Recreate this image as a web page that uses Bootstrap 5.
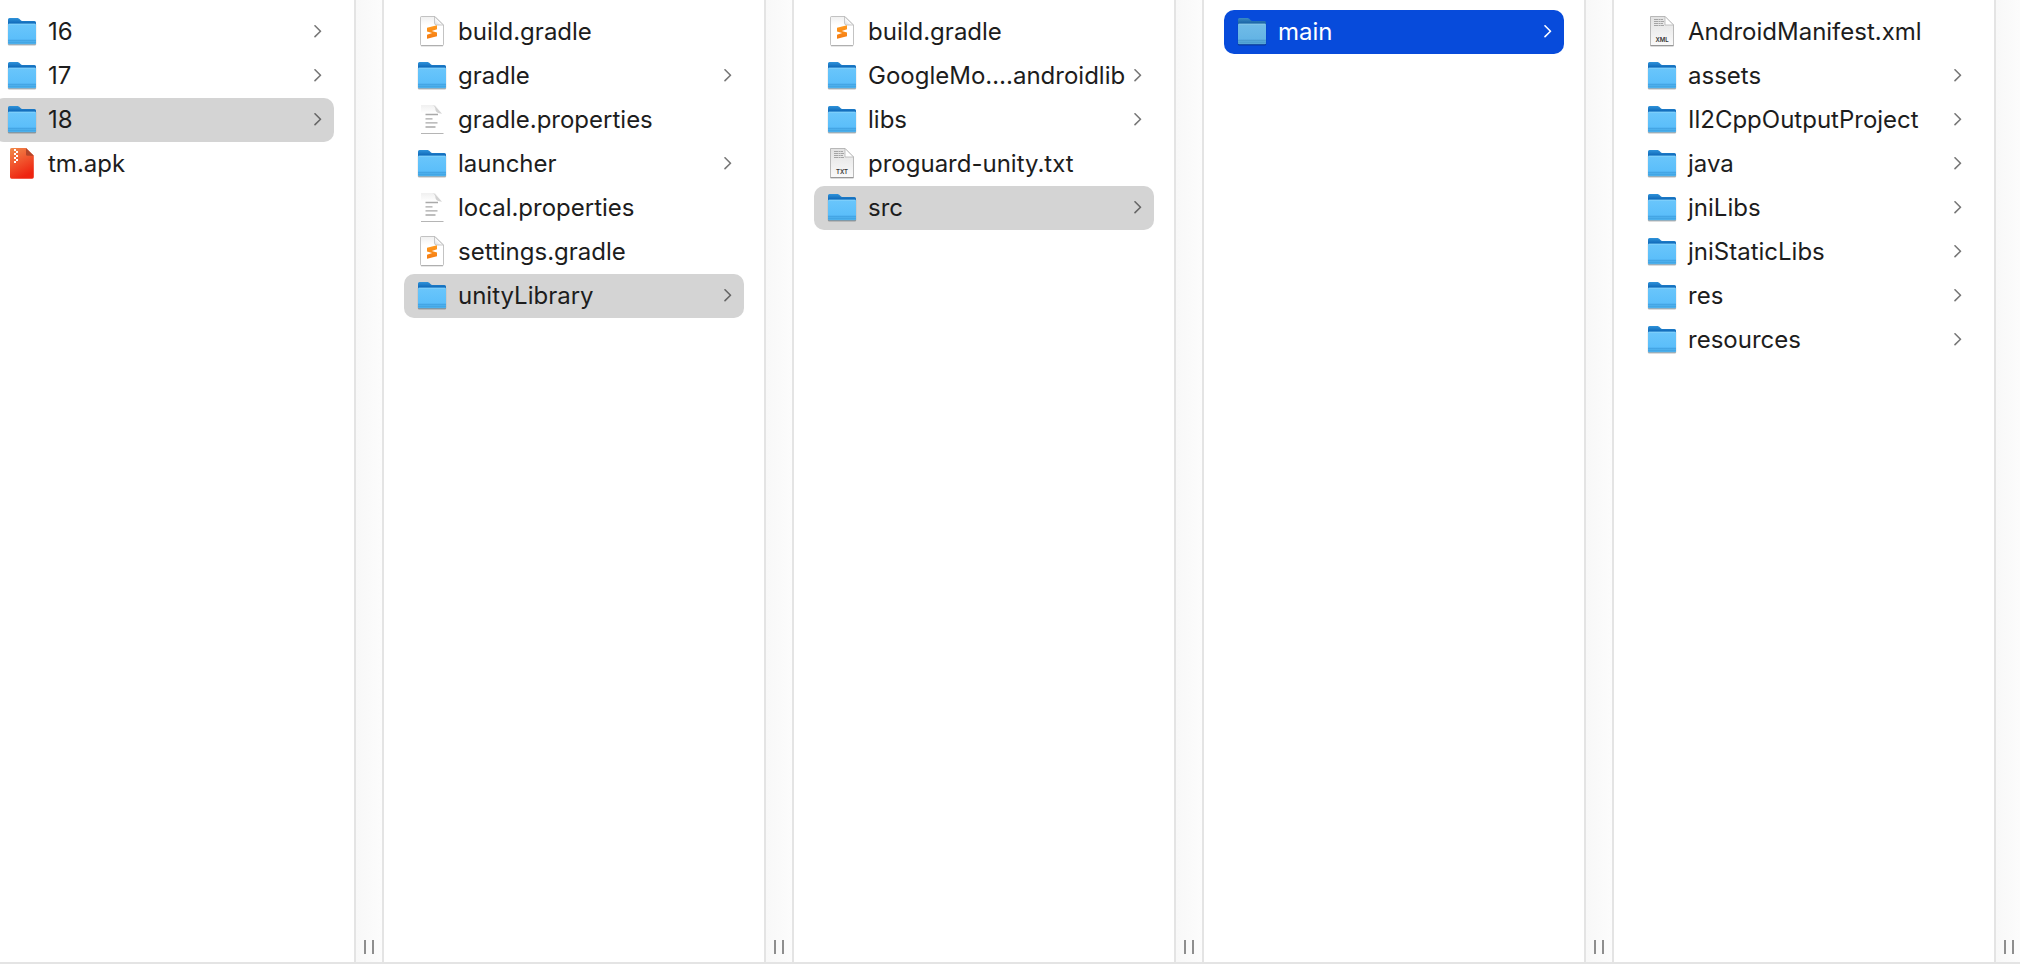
<!DOCTYPE html>
<html lang="en">
<head>
<meta charset="utf-8">
<meta name="viewport" content="width=device-width, initial-scale=1">
<title>unityLibrary</title>
<link href="https://cdn.jsdelivr.net/npm/bootstrap@5.3.0/dist/css/bootstrap.min.css" rel="stylesheet">
<style>
  body { font-family: Inter, "Liberation Sans", sans-serif; font-size: 24px; line-height: 32px; color: #1d1d1d; background: #fff; }
  .browser { border-bottom: 2px solid #e4e4e4; }
  .pane { flex: 380 1 0; min-width: 0; }
  .pane .list-group { padding: 10px 20px; }
  .pane-first { flex-grow: 354; }
  .pane-first .list-group { padding-left: 0; margin-left: -6px; }
  .entry { height: 44px; padding: 0 12px; gap: 10px; border-radius: 10px; color: inherit; text-decoration: none; }
  .entry span { min-width: 0; }
  .entry.selected { background: #d4d4d4; }
  .entry.focused { background: #074bdb; color: #fff; }
  .entry-icon { width: 32px; height: 32px; }
  .entry-icon text { font-size: 6px; font-weight: 600; fill: #333; text-anchor: middle; }
  .chevron { width: 8px; height: 14px; fill: none; stroke: #777; stroke-width: 1.6; stroke-linecap: round; stroke-linejoin: round; }
  .selected .chevron { stroke: #666; }
  .focused .chevron { stroke: #fff; }
  .focused .entry-icon { filter: brightness(.96) saturate(.85); }
  .gutter { width: 30px; border: solid #e4e4e4; border-width: 0 2px; background: linear-gradient(90deg, #f8f8f8, #fcfcfc); padding: 0 8px 8px; }
  .gutter-last { width: 26px; border-right: 0; padding-right: 0; }
  .grip { width: 10px; height: 14px; padding: 0; background: none; border: solid #8e8e8e; border-width: 0 2px; cursor: col-resize; }
</style>
</head>
<body>
<svg class="position-absolute" width="0" height="0" aria-hidden="true">
  <defs>
    <linearGradient id="g-back" x1="0" y1="0" x2="0" y2="1"><stop offset="0" stop-color="#2f93da"/><stop offset=".25" stop-color="#0f68b8"/><stop offset="1" stop-color="#0f68b8"/></linearGradient>
    <linearGradient id="g-front" x1="0" y1="0" x2="0" y2="1"><stop offset="0" stop-color="#6ac6fb"/><stop offset=".75" stop-color="#5bbefa"/><stop offset="1" stop-color="#4aaeea"/></linearGradient>
    <linearGradient id="g-apk" x1="0" y1="0" x2=".4" y2="1"><stop offset="0" stop-color="#f08a4b"/><stop offset=".5" stop-color="#f1572f"/><stop offset="1" stop-color="#ee2410"/></linearGradient>
    <linearGradient id="g-sheet" x1="0" y1="0" x2="0" y2="1"><stop offset="0" stop-color="#f0f0f0"/><stop offset=".3" stop-color="#fff"/></linearGradient>
    <linearGradient id="g-type" x1="0" y1="0" x2="0" y2="1"><stop offset="0" stop-color="#e2e2e2"/><stop offset="1" stop-color="#fafafa"/></linearGradient>
    <linearGradient id="g-fold" x1="0" y1="1" x2="1" y2="0"><stop offset="0" stop-color="#d8d8d8"/><stop offset=".5" stop-color="#fff"/></linearGradient>
    <linearGradient id="g-sub" x1="0" y1="0" x2="0" y2="1"><stop offset="0" stop-color="#ff9a1c"/><stop offset="1" stop-color="#f57c14"/></linearGradient>
  </defs>
  <symbol id="folder" viewBox="0 0 32 32">
    <path d="M2 27.500h28v1q0 1-1 1H3q-1 0-1-1z" fill="#000" opacity=".28"/>
    <path d="M1.500 8h29v20.500h-29z" fill="#000" opacity=".1"/>
    <path d="M2 3.500Q2 2 3.500 2h7.500c1.500 0 2 .5 3 1.500 1 1 1.800 1.500 3 1.500h11.500Q30 5 30 6.500V24H2z" fill="url(#g-back)"/>
    <path d="M2 9q0-1.200 1.200-1.200h25.600Q30 7.800 30 9v18.200q0 1-1 1H3q-1 0-1-1z" fill="url(#g-front)"/>
    <path d="M2.500 8.200h27" stroke="#8ad5fd" stroke-width=".8"/>
    <path d="M2 24.300h28M2 26.200h28" stroke="#3b9bdb" stroke-width=".8"/>
  </symbol>
  <symbol id="archive" viewBox="0 1 32 32">
    <path d="M5.500 1H20l7.800 7.800V30q0 1.800-1.600 1.800H5.600Q4 31.800 4 30V2.500Q4 1 5.500 1z" fill="url(#g-apk)"/>
    <path d="M20 1l7.800 7.800h-6.300Q20 8.800 20 7.300z" fill="#b3452a"/>
    <path d="M8 2h2v2H8zM10 4h2v2h-2zM8 6h2v2H8zM10 8h2v2h-2zM8 10h2v2H8zM10 12h2v2h-2zM8 14h2v2H8z" fill="#fff"/>
  </symbol>
  <symbol id="sublime" viewBox="0 0 32 32">
    <path d="M5.500 .5H19L27.500 9V28.500q0 1-1 1H5.500q-1 0-1-1V1.500q0-1 1-1z" fill="url(#g-sheet)" stroke="#b4b4b4" stroke-width=".8"/>
    <path d="M5 29.800h22" stroke="#a0a0a0" stroke-width=".8"/>
    <path d="M18.500 .7V7q0 2 2 2h6.800z" fill="url(#g-fold)" stroke="#bdbdbd" stroke-width=".8"/>
    <path d="M21 9.300v4l-5.200 1.700 5.200 1.500v3.700L11 22.800v-4l5.200-1.700-5.200-1.500v-3.800z" fill="url(#g-sub)"/>
  </symbol>
  <symbol id="plain" viewBox="0 0 32 32">
    <path d="M5 1h14l7.500 8.500V29H5z" fill="url(#g-sheet)"/>
    <path d="M16 1q3.500 1 3.500 5 0 3 6.500 3.800L19 2z" fill="#d2d2d2"/>
    <path d="M5 29.500h22.500" stroke="#b5b5b5"/>
    <path d="M9.500 10.500h12.500M9.500 14.800h7M9.500 18.800h12M9.500 23h10" stroke="#a9a9a9" stroke-width="1.300"/>
  </symbol>
  <symbol id="sheet" viewBox="0 0 32 32">
    <path d="M4.500 .5H19L27.500 9V29.500h-23z" fill="url(#g-type)" stroke="#aaa" stroke-width=".8"/>
    <path d="M4.500 29.800h23" stroke="#888"/>
    <path d="M8 3.500h9M8 5.500h10M8 7.500h9M8 9.500h10" stroke="#a5a5a5" stroke-width="1.200" stroke-dasharray="4 .5 2 .4"/>
    <path d="M19 .5V9h8.500z" fill="#fff" stroke="#b5b5b5" stroke-width=".8"/>
  </symbol>
  <symbol id="next" viewBox="0 0 8 14"><path d="M1 .8l5.500 5.400L1 11.600"/></symbol>
</svg>

<main class="browser d-flex min-vh-100 overflow-hidden">
  <section class="pane pane-first overflow-hidden" aria-label="Builds">
    <div class="list-group">
      <a href="#" class="entry d-flex align-items-center"><svg class="entry-icon flex-shrink-0"><use href="#folder"/></svg><span class="text-nowrap flex-grow-1">16</span><svg class="chevron flex-shrink-0"><use href="#next"/></svg></a>
      <a href="#" class="entry d-flex align-items-center"><svg class="entry-icon flex-shrink-0"><use href="#folder"/></svg><span class="text-nowrap flex-grow-1">17</span><svg class="chevron flex-shrink-0"><use href="#next"/></svg></a>
      <a href="#" class="entry selected d-flex align-items-center"><svg class="entry-icon flex-shrink-0"><use href="#folder"/></svg><span class="text-nowrap flex-grow-1">18</span><svg class="chevron flex-shrink-0"><use href="#next"/></svg></a>
      <a href="#" class="entry d-flex align-items-center"><svg class="entry-icon flex-shrink-0"><use href="#archive"/></svg><span class="text-nowrap flex-grow-1">tm.apk</span></a>
    </div>
  </section>
  <div class="gutter flex-shrink-0 d-flex align-items-end"><button type="button" class="grip" aria-label="Resize column"></button></div>

  <section class="pane" aria-label="18">
    <div class="list-group">
      <a href="#" class="entry d-flex align-items-center"><svg class="entry-icon flex-shrink-0"><use href="#sublime"/></svg><span class="text-nowrap flex-grow-1">build.gradle</span></a>
      <a href="#" class="entry d-flex align-items-center"><svg class="entry-icon flex-shrink-0"><use href="#folder"/></svg><span class="text-nowrap flex-grow-1">gradle</span><svg class="chevron flex-shrink-0"><use href="#next"/></svg></a>
      <a href="#" class="entry d-flex align-items-center"><svg class="entry-icon flex-shrink-0"><use href="#plain"/></svg><span class="text-nowrap flex-grow-1">gradle.properties</span></a>
      <a href="#" class="entry d-flex align-items-center"><svg class="entry-icon flex-shrink-0"><use href="#folder"/></svg><span class="text-nowrap flex-grow-1">launcher</span><svg class="chevron flex-shrink-0"><use href="#next"/></svg></a>
      <a href="#" class="entry d-flex align-items-center"><svg class="entry-icon flex-shrink-0"><use href="#plain"/></svg><span class="text-nowrap flex-grow-1">local.properties</span></a>
      <a href="#" class="entry d-flex align-items-center"><svg class="entry-icon flex-shrink-0"><use href="#sublime"/></svg><span class="text-nowrap flex-grow-1">settings.gradle</span></a>
      <a href="#" class="entry selected d-flex align-items-center"><svg class="entry-icon flex-shrink-0"><use href="#folder"/></svg><span class="text-nowrap flex-grow-1">unityLibrary</span><svg class="chevron flex-shrink-0"><use href="#next"/></svg></a>
    </div>
  </section>
  <div class="gutter flex-shrink-0 d-flex align-items-end"><button type="button" class="grip" aria-label="Resize column"></button></div>

  <section class="pane" aria-label="unityLibrary">
    <div class="list-group">
      <a href="#" class="entry d-flex align-items-center"><svg class="entry-icon flex-shrink-0"><use href="#sublime"/></svg><span class="text-nowrap flex-grow-1">build.gradle</span></a>
      <a href="#" class="entry d-flex align-items-center"><svg class="entry-icon flex-shrink-0"><use href="#folder"/></svg><span class="text-nowrap flex-grow-1">GoogleMo….androidlib</span><svg class="chevron flex-shrink-0"><use href="#next"/></svg></a>
      <a href="#" class="entry d-flex align-items-center"><svg class="entry-icon flex-shrink-0"><use href="#folder"/></svg><span class="text-nowrap flex-grow-1">libs</span><svg class="chevron flex-shrink-0"><use href="#next"/></svg></a>
      <a href="#" class="entry d-flex align-items-center"><svg class="entry-icon flex-shrink-0" viewBox="0 0 32 32"><use href="#sheet"/><text x="16" y="26">TXT</text></svg><span class="text-nowrap flex-grow-1">proguard-unity.txt</span></a>
      <a href="#" class="entry selected d-flex align-items-center"><svg class="entry-icon flex-shrink-0"><use href="#folder"/></svg><span class="text-nowrap flex-grow-1">src</span><svg class="chevron flex-shrink-0"><use href="#next"/></svg></a>
    </div>
  </section>
  <div class="gutter flex-shrink-0 d-flex align-items-end"><button type="button" class="grip" aria-label="Resize column"></button></div>

  <section class="pane" aria-label="src">
    <div class="list-group">
      <a href="#" class="entry focused d-flex align-items-center" aria-current="true"><svg class="entry-icon flex-shrink-0"><use href="#folder"/></svg><span class="text-nowrap flex-grow-1">main</span><svg class="chevron flex-shrink-0"><use href="#next"/></svg></a>
    </div>
  </section>
  <div class="gutter flex-shrink-0 d-flex align-items-end"><button type="button" class="grip" aria-label="Resize column"></button></div>

  <section class="pane" aria-label="main">
    <div class="list-group">
      <a href="#" class="entry d-flex align-items-center"><svg class="entry-icon flex-shrink-0" viewBox="0 0 32 32"><use href="#sheet"/><text x="16" y="26">XML</text></svg><span class="text-nowrap flex-grow-1">AndroidManifest.xml</span></a>
      <a href="#" class="entry d-flex align-items-center"><svg class="entry-icon flex-shrink-0"><use href="#folder"/></svg><span class="text-nowrap flex-grow-1">assets</span><svg class="chevron flex-shrink-0"><use href="#next"/></svg></a>
      <a href="#" class="entry d-flex align-items-center"><svg class="entry-icon flex-shrink-0"><use href="#folder"/></svg><span class="text-nowrap flex-grow-1">Il2CppOutputProject</span><svg class="chevron flex-shrink-0"><use href="#next"/></svg></a>
      <a href="#" class="entry d-flex align-items-center"><svg class="entry-icon flex-shrink-0"><use href="#folder"/></svg><span class="text-nowrap flex-grow-1">java</span><svg class="chevron flex-shrink-0"><use href="#next"/></svg></a>
      <a href="#" class="entry d-flex align-items-center"><svg class="entry-icon flex-shrink-0"><use href="#folder"/></svg><span class="text-nowrap flex-grow-1">jniLibs</span><svg class="chevron flex-shrink-0"><use href="#next"/></svg></a>
      <a href="#" class="entry d-flex align-items-center"><svg class="entry-icon flex-shrink-0"><use href="#folder"/></svg><span class="text-nowrap flex-grow-1">jniStaticLibs</span><svg class="chevron flex-shrink-0"><use href="#next"/></svg></a>
      <a href="#" class="entry d-flex align-items-center"><svg class="entry-icon flex-shrink-0"><use href="#folder"/></svg><span class="text-nowrap flex-grow-1">res</span><svg class="chevron flex-shrink-0"><use href="#next"/></svg></a>
      <a href="#" class="entry d-flex align-items-center"><svg class="entry-icon flex-shrink-0"><use href="#folder"/></svg><span class="text-nowrap flex-grow-1">resources</span><svg class="chevron flex-shrink-0"><use href="#next"/></svg></a>
    </div>
  </section>
  <div class="gutter gutter-last flex-shrink-0 d-flex align-items-end"><button type="button" class="grip" aria-label="Resize column"></button></div>
</main>
<script src="https://cdn.jsdelivr.net/npm/bootstrap@5.3.0/dist/js/bootstrap.bundle.min.js"></script>
</body>
</html>
